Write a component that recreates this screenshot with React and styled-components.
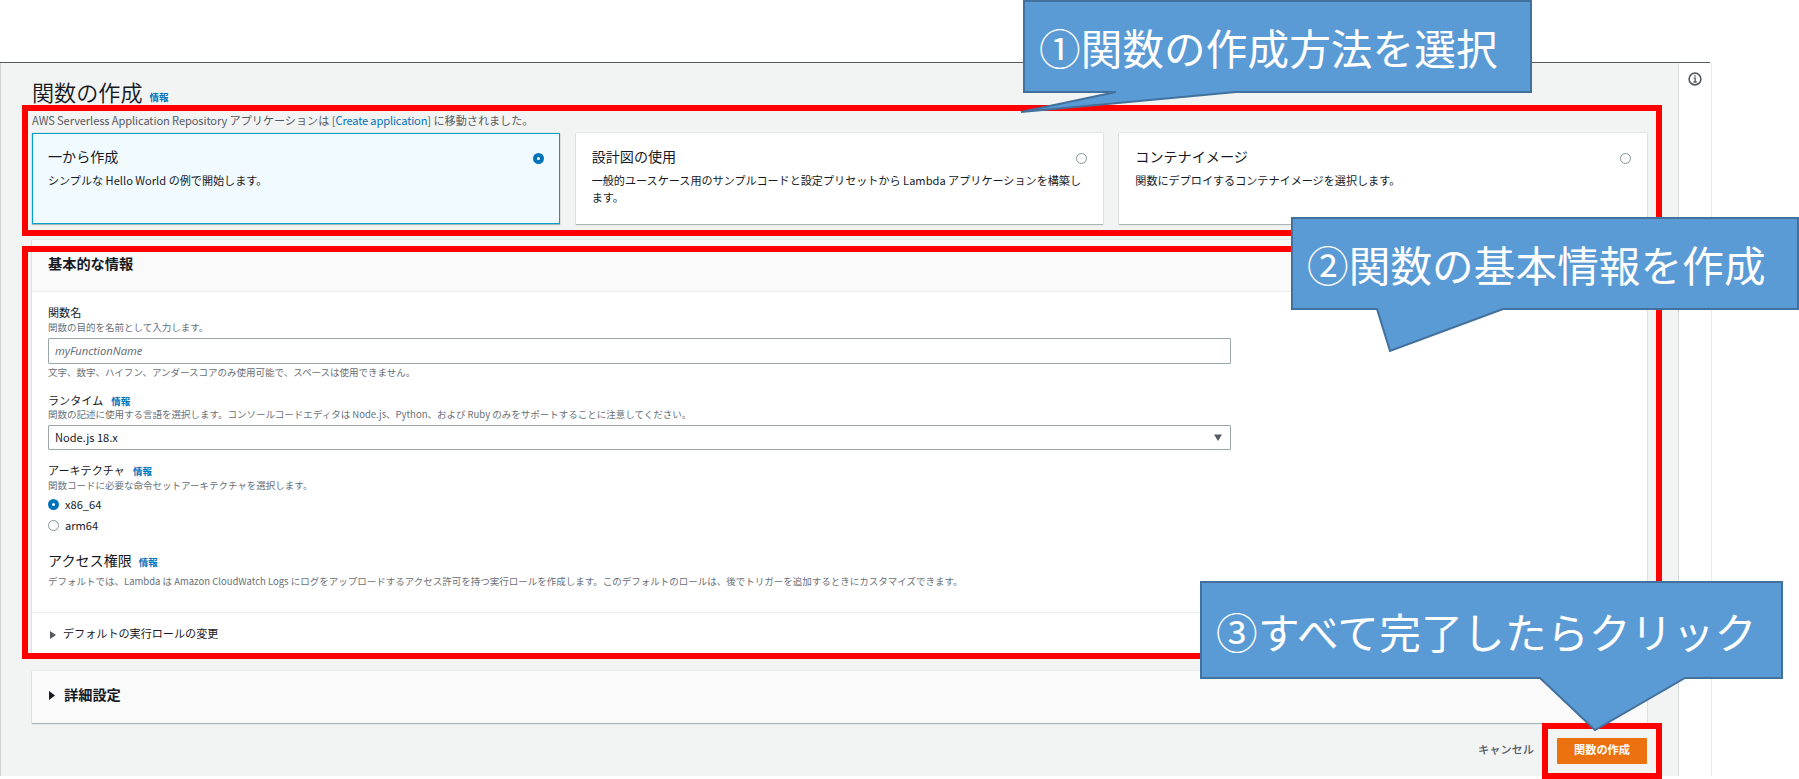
import { useState } from 'react';
import styled, { createGlobalStyle } from 'styled-components';

const METHODS = [
  {
    id: 'scratch',
    title: '一から作成',
    text: 'シンプルな Hello World の例で開始します。',
  },
  {
    id: 'blueprint',
    title: '設計図の使用',
    text: '一般的ユースケース用のサンプルコードと設定プリセットから Lambda アプリケーションを構築します。',
  },
  {
    id: 'container',
    title: 'コンテナイメージ',
    text: '関数にデプロイするコンテナイメージを選択します。',
  },
]

const ARCHITECTURES = ['x86_64', 'arm64']

// tail points are relative to the callout's own top left corner
const CALLOUTS = [
  {
    text: '①関数の作成方法を選択',
    x: 1023, y: 0, width: 509, height: 93, shift: 1, spacing: 0.1,
    tail: { from: 93, to: 213, tipX: -2, tipY: 112 },
  },
  {
    text: '②関数の基本情報を作成',
    x: 1291, y: 217, width: 508, height: 93, shift: 1, spacing: 0.1,
    tail: { from: 86, to: 212, tipX: 99, tipY: 134 },
  },
  {
    text: '③すべて完了したらクリック',
    x: 1200, y: 581, width: 583, height: 98, shift: 1, spacing: 0.35,
    tail: { from: 340, to: 485, tipX: 395, tipY: 149 },
  },
]

const Callout = ({ text, x, y, width, height, shift, spacing, tail }) => {
  const w = width - 1
  const h = height - 1
  const d = `M1 1H${w}V${h}H${tail.to}L${tail.tipX} ${tail.tipY}L${tail.from} ${h}H1Z`

  return (
    <CalloutBox style={{ left: x, top: y, width, height }}>
      <CalloutShape width={width} height={height}>
        <path d={d} fill="#5b9bd5" stroke="#41719c" strokeWidth="2" />
      </CalloutShape>
      <CalloutText $shift={shift} $spacing={spacing}>{text}</CalloutText>
    </CalloutBox>
  )
}

const App = () => {
  const [method, setMethod] = useState('scratch')
  const [arch, setArch] = useState('x86_64')
  const [name, setName] = useState('')

  return (
    <Page>
      <GlobalStyle />
      <Console>
        <Main>
          <TitleRow>
            <Title>関数の作成</Title>
            <Info $gap={7}>情報</Info>
          </TitleRow>
          <Intro>
            <Latin>AWS Serverless Application Repository</Latin> アプリケーションは [<Link>Create application</Link>] に移動されました。
          </Intro>

          <Cards>
            {METHODS.map((m) => (
              <Card key={m.id} $active={method === m.id} onClick={() => setMethod(m.id)}>
                <CardHead>
                  <CardTitle>{m.title}</CardTitle>
                  <Radio $on={method === m.id} />
                </CardHead>
                <CardText>{m.text}</CardText>
              </Card>
            ))}
          </Cards>

          <Panel>
            <PanelHeader>基本的な情報</PanelHeader>
            <PanelBody>
              <Label>関数名</Label>
              <Hint>関数の目的を名前として入力します。</Hint>
              <Input value={name} onChange={(e) => setName(e.target.value)} placeholder="myFunctionName" />
              <Hint>文字、数字、ハイフン、アンダースコアのみ使用可能で、スペースは使用できません。</Hint>

              <Label $top={13}>ランタイム<Info $gap={8}>情報</Info></Label>
              <Hint $tight>関数の記述に使用する言語を選択します。コンソールコードエディタは Node.js、Python、および Ruby のみをサポートすることに注意してください。</Hint>
              <Select>
                <SelectValue>Node.js 18.x</SelectValue>
                <Caret width="8" height="7" viewBox="0 0 8 7"><path d="M0 0.5H8L4 7Z" fill="#545b64" /></Caret>
              </Select>

              <Label $top={13}>アーキテクチャ<Info $gap={8}>情報</Info></Label>
              <Hint>関数コードに必要な命令セットアーキテクチャを選択します。</Hint>
              <Options>
                {ARCHITECTURES.map((a) => (
                  <Option key={a} onClick={() => setArch(a)}>
                    <Radio $on={arch === a} />
                    <OptionText>{a}</OptionText>
                  </Option>
                ))}
              </Options>

              <SubHeading>アクセス権限<Info $gap={7}>情報</Info></SubHeading>
              <Hint>デフォルトでは、Lambda は Amazon CloudWatch Logs にログをアップロードするアクセス許可を持つ実行ロールを作成します。このデフォルトのロールは、後でトリガーを追加するときにカスタマイズできます。</Hint>
            </PanelBody>
            <RoleToggle>
              <svg width="6" height="8" viewBox="0 0 6 8"><path d="M0 0L6 4L0 8Z" fill="#545b64" /></svg>
              <ToggleText>デフォルトの実行ロールの変更</ToggleText>
            </RoleToggle>
          </Panel>

          <Advanced>
            <svg width="6" height="9" viewBox="0 0 6 9"><path d="M0 0L6 4.5L0 9Z" fill="#16191f" /></svg>
            <ToggleText>詳細設定</ToggleText>
          </Advanced>

          <Footer>
            <Cancel>キャンセル</Cancel>
            <Submit>関数の作成</Submit>
          </Footer>
        </Main>
        <HelpRail>
          <svg width="14" height="14" viewBox="0 0 14 14" fill="none" stroke="#545b64">
            <circle cx="7" cy="7" r="5.9" strokeWidth="1.6" />
            <path d="M5.6 6.2H7.2V10M5.4 10H8.8" strokeWidth="1.3" />
            <path d="M6.3 4H7.7" strokeWidth="1.5" />
          </svg>
        </HelpRail>
      </Console>

      <Frame $x={22} $y={105} $w={1640} $h={131} />
      <Frame $x={22} $y={246} $w={1640} $h={413} />
      <Frame $x={1542} $y={723} $w={120} $h={56} />
      {CALLOUTS.map((c) => <Callout key={c.text} {...c} />)}
    </Page>
  )
}

const GlobalStyle = createGlobalStyle`
  *, *::before, *::after { box-sizing: border-box; }
  body {
    margin: 0;
    background: #fff;
    font-family: 'Noto Sans CJK JP', sans-serif;
    font-size: 11.1px;
    color: #16191f;
  }
`

const Page = styled.div`
  position: relative;
  width: 1799px;
  height: 779px;
  padding-top: 62px;
  overflow: hidden;
`

const Console = styled.div`
  display: grid;
  grid-template-columns: 1678px 34px;
  width: 1712px;
  height: 714px;
  background: linear-gradient(#545b64, #545b64) 0 0 / 1710px 1px no-repeat;
  padding-top: 1px;
`

const Main = styled.main`
  display: flex;
  flex-direction: column;
  padding: 13px 31px 0;
  border-left: 1px solid #cfd3d3;
  background: #f2f3f3;
`

const HelpRail = styled.aside`
  display: flex;
  justify-content: center;
  align-items: flex-start;
  padding: 9px 1px 0 0;
  border-left: 1px solid #d5dbdb;
  border-right: 1px solid #eaeded;
`

const TitleRow = styled.div`
  display: flex;
  align-items: baseline;
  height: 30px;
`

const Title = styled.h1`
  margin: 0;
  font-size: 22.1px;
  line-height: 30px;
  font-weight: 350;
`

const Info = styled.a`
  margin-left: ${(props) => props.$gap}px;
  font-size: 9.5px;
  font-weight: bold;
  color: #0073bb;
`

const Intro = styled.p`
  margin: 4px 0 3px;
  line-height: 20px;
  color: #545b64;
`

const Latin = styled.span`
  letter-spacing: -0.1px;
`

const Link = styled.a`
  letter-spacing: -0.15px;
  color: #0073bb;
`

const Cards = styled.div`
  display: grid;
  grid-template-columns: repeat(3, 1fr);
  gap: 16px;
  height: 91px;
`

const Card = styled.div`
  padding: ${(props) => (props.$active ? '12px 15px' : '13px 16px')};
  background: ${(props) => (props.$active ? '#f1faff' : '#fff')};
  border: ${(props) => (props.$active ? '1px solid #00a1c9' : 'none')};
  box-shadow: 0 1px 1px #aab7b8, 0 0 1px #aab7b8;
`

const CardHead = styled.div`
  display: flex;
  justify-content: space-between;
  align-items: flex-end;
  height: 20px;

  & > :last-child {
    margin-bottom: 2px;
  }
`

const CardTitle = styled.div`
  font-size: 14.1px;
  line-height: 20px;
`

const CardText = styled.div`
  margin: 6px -2px 0 0;
  line-height: 17px;
`

const Radio = styled.span`
  flex: none;
  width: 11px;
  height: 11px;
  border-radius: 50%;
  border: ${(props) => (props.$on ? '4px solid #0073bb' : '1px solid #879596')};
  background: #fff;
`

const Panel = styled.section`
  margin-top: 16px;
  height: 416px;
  background: #fff;
  box-shadow: 0 1px 1px #aab7b8, 0 0 1px #aab7b8;
`

const PanelHeader = styled.h2`
  margin: 0;
  height: 52px;
  padding: 13px 16px;
  border-bottom: 1px solid #eaeded;
  background: #fafafa;
  font-size: 14.2px;
  line-height: 20px;
  font-weight: bold;
`

const PanelBody = styled.div`
  height: 320px;
  padding: 13px 16px 0;
`

const Label = styled.div`
  display: flex;
  align-items: baseline;
  margin-top: ${(props) => props.$top || 0}px;
  height: 15px;
  line-height: 15px;
`

const Hint = styled.div`
  height: ${(props) => (props.$tight ? 14 : 15)}px;
  font-size: 9.5px;
  line-height: ${(props) => (props.$tight ? 13 : 15)}px;
  color: #687078;
  white-space: nowrap;
`

const Input = styled.input`
  display: block;
  width: 1183px;
  height: 26px;
  margin: 3px 0 1px;
  padding: 0 6px 2px;
  border: 1px solid #9aa7a8;
  border-radius: 1px;
  outline: none;
  font-family: 'Noto Sans', 'Noto Sans CJK JP', sans-serif;
  font-size: 11.2px;

  &::placeholder {
    color: #687078;
    font-style: italic;
  }
`

const Select = styled.div`
  display: flex;
  justify-content: space-between;
  align-items: center;
  width: 1183px;
  height: 25px;
  margin-top: 3px;
  padding: 0 8px 0 6px;
  border: 1px solid #9aa7a8;
  border-radius: 1px;
`

const SelectValue = styled.span`
  padding-bottom: 2px;
`

const Caret = styled.svg`
  flex: none;
`

const Options = styled.div`
  display: flex;
  flex-direction: column;
  gap: 5px;
  margin-top: 3px;
`

const Option = styled.div`
  display: flex;
  align-items: center;
  gap: 6px;
  height: 16px;
`

const OptionText = styled.span`
  padding-bottom: 1px;
`

const SubHeading = styled.h3`
  display: flex;
  align-items: baseline;
  margin: 17px 0 4px;
  height: 20px;
  font-size: 14.1px;
  line-height: 20px;
  font-weight: normal;
`

const RoleToggle = styled.div`
  display: flex;
  align-items: center;
  gap: 7px;
  height: 44px;
  padding-left: 18px;
  border-top: 1px solid #eaeded;
`

const ToggleText = styled.span`
  padding-bottom: 3px;
`

const Advanced = styled.section`
  display: flex;
  align-items: center;
  gap: 9px;
  height: 52px;
  margin-top: 15px;
  padding: 0 17px 4px;
  background: #fafafa;
  box-shadow: 0 1px 1px #aab7b8, 0 0 1px #aab7b8;
  font-size: 14.2px;
  font-weight: bold;
`

const Footer = styled.div`
  display: flex;
  justify-content: flex-end;
  align-items: center;
  gap: 23px;
  margin-top: 15px;
  height: 26px;
`

const Cancel = styled.button`
  padding: 0 0 4px;
  border: none;
  background: none;
  font: 500 11.2px 'Noto Sans CJK JP', sans-serif;
  color: #545b64;
`

const Submit = styled.button`
  width: 90px;
  height: 26px;
  padding: 0 0 4px;
  border: none;
  border-radius: 1px;
  background: #ec7211;
  font: bold 11.2px 'Noto Sans CJK JP', sans-serif;
  color: #fff;
`

const Frame = styled.div`
  position: absolute;
  left: ${(props) => props.$x}px;
  top: ${(props) => props.$y}px;
  width: ${(props) => props.$w}px;
  height: ${(props) => props.$h}px;
  border: 6px solid #f00;
`

const CalloutBox = styled.div`
  position: absolute;
  display: flex;
  align-items: center;
`

const CalloutShape = styled.svg`
  position: absolute;
  left: 0;
  top: 0;
  overflow: visible;
`

const CalloutText = styled.span`
  position: relative;
  padding-left: 16px;
  padding-top: ${(props) => props.$shift}px;
  font-size: 41.6px;
  line-height: 50px;
  letter-spacing: ${(props) => props.$spacing}px;
  color: #fff;
  white-space: nowrap;
`

export default App
